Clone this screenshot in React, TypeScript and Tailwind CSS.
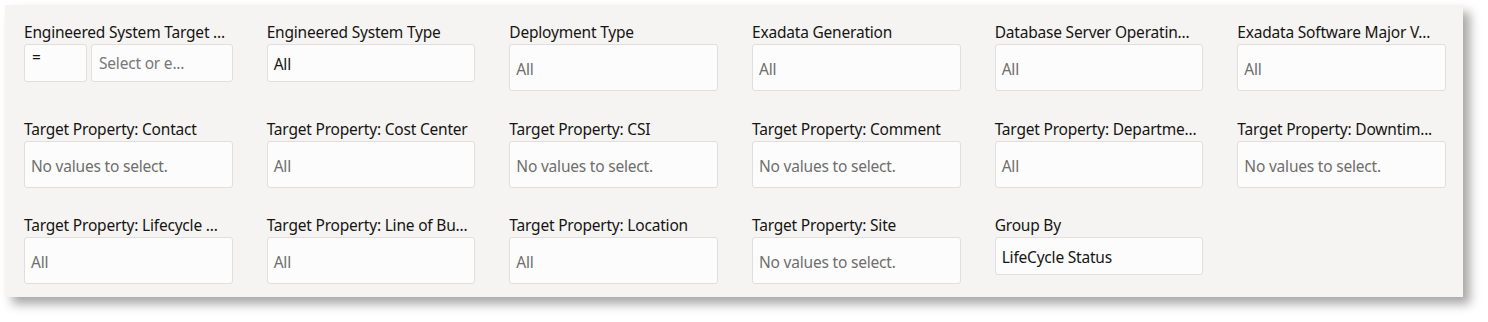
import React from 'react';

type Field = {
  label: string;
  value?: string;
  kind?: 'all' | 'none' | 'text' | 'operator';
};

// labels are shown clipped the way the filter panel renders them
const fields: Field[] = [
  { label: 'Engineered System Target ...', kind: 'operator' },
  { label: 'Engineered System Type', value: 'All', kind: 'text' },
  { label: 'Deployment Type', kind: 'all' },
  { label: 'Exadata Generation', kind: 'all' },
  { label: 'Database Server Operatin...', kind: 'all' },
  { label: 'Exadata Software Major V...', kind: 'all' },
  { label: 'Target Property: Contact', kind: 'none' },
  { label: 'Target Property: Cost Center', kind: 'all' },
  { label: 'Target Property: CSI', kind: 'none' },
  { label: 'Target Property: Comment', kind: 'none' },
  { label: 'Target Property: Departme...', kind: 'all' },
  { label: 'Target Property: Downtim...', kind: 'none' },
  { label: 'Target Property: Lifecycle ...', kind: 'all' },
  { label: 'Target Property: Line of Bu...', kind: 'all' },
  { label: 'Target Property: Location', kind: 'all' },
  { label: 'Target Property: Site', kind: 'none' },
  { label: 'Group By', value: 'LifeCycle Status', kind: 'text' },
];

const boxBase = 'rounded-[3px] border border-[#e0dfdd] bg-[#fcfcfc]';

const FieldBox: React.FC<{ field: Field }> = ({ field }) => {
  if (field.kind === 'operator') {
    return (
      <div className="flex gap-[4px]">
        <div className={`${boxBase} h-[38px] w-[63px] shrink-0 pl-[7px] pt-[1px] text-[#161513]`}>=</div>
        <div className={`${boxBase} flex h-[38px] min-w-0 flex-1 items-center pl-[7px] pt-[2px] text-[#78777a]`}>
          <span className="whitespace-nowrap">Select or e...</span>
        </div>
      </div>
    );
  }
  if (field.kind === 'text') {
    return (
      <div className={`${boxBase} flex h-[38px] items-center pl-[6px] pt-[3px] text-[#161513]`}>
        {field.value}
      </div>
    );
  }
  return (
    <div className={`${boxBase} flex h-[47px] items-center pl-[6px] pt-[5px] text-[#6f6e6c]`}>
      {field.kind === 'all' ? 'All' : 'No values to select.'}
    </div>
  );
};

export default function App() {
  return (
    <div className="min-h-screen bg-white pl-[5px] pt-[5px] font-['Noto_Sans',sans-serif] text-[15.5px] tracking-[-0.2px]">
      <div className="h-[292px] w-[1458px] bg-[#f5f4f2] pb-[14px] pl-[19px] pr-[17px] pt-[17px] shadow-[7px_7px_10px_rgba(0,0,0,0.35)]">
        <div className="grid grid-cols-6 gap-x-[34px] gap-y-[27.5px]">
          {fields.map((f) => (
            <div key={f.label} className="flex min-w-0 flex-col">
              <div className="mb-[1px] h-[21px] whitespace-nowrap leading-[21px] text-[#161513]">{f.label}</div>
              <FieldBox field={f} />
            </div>
          ))}
        </div>
      </div>
    </div>
  );
}
